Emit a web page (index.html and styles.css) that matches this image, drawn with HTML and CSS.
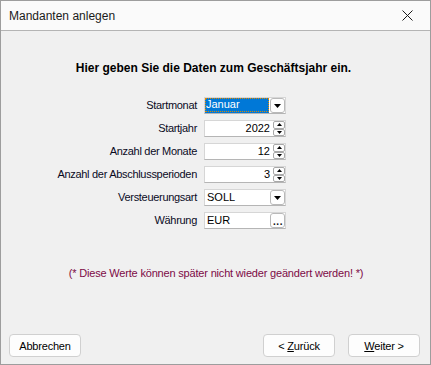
FILE: index.html
```html
<!DOCTYPE html>
<html lang="de">
<head>
    <meta charset="UTF-8">
    <title>Mandanten anlegen</title>
    <link rel="stylesheet" href="styles.css">
</head>
<body>
    <div class="dialog">
        <div class="titlebar">
            <span class="title">Mandanten anlegen</span>
            <span class="close">
                <svg width="11" height="11" viewBox="0 0 11 11"><path d="M0.5 0.5L10.5 10.5M10.5 0.5L0.5 10.5" stroke="#1a1a1a" stroke-width="1" fill="none"/></svg>
            </span>
        </div>

        <div class="content">
            <h1 class="intro">Hier geben Sie die Daten zum Geschäftsjahr ein.</h1>

            <div class="form">
                <label>Startmonat</label>
                <div class="combo focused">
                    <span class="combo-value"><span class="selected">Januar</span></span>
                    <span class="combo-btn"><svg width="7" height="4" viewBox="0 0 7 4"><path d="M0 0h7L3.5 4z"/></svg></span>
                </div>

                <label>Startjahr</label>
                <div class="spin">
                    <span class="spin-value">2022</span>
                    <span class="spin-btns">
                        <span class="spin-btn"><svg width="5" height="3" viewBox="0 0 5 3"><path d="M0 3h5L2.5 0z"/></svg></span>
                        <span class="spin-btn"><svg width="5" height="3" viewBox="0 0 5 3"><path d="M0 0h5L2.5 3z"/></svg></span>
                    </span>
                </div>

                <label>Anzahl der Monate</label>
                <div class="spin">
                    <span class="spin-value">12</span>
                    <span class="spin-btns">
                        <span class="spin-btn"><svg width="5" height="3" viewBox="0 0 5 3"><path d="M0 3h5L2.5 0z"/></svg></span>
                        <span class="spin-btn"><svg width="5" height="3" viewBox="0 0 5 3"><path d="M0 0h5L2.5 3z"/></svg></span>
                    </span>
                </div>

                <label>Anzahl der Abschlussperioden</label>
                <div class="spin">
                    <span class="spin-value">3</span>
                    <span class="spin-btns">
                        <span class="spin-btn"><svg width="5" height="3" viewBox="0 0 5 3"><path d="M0 3h5L2.5 0z"/></svg></span>
                        <span class="spin-btn"><svg width="5" height="3" viewBox="0 0 5 3"><path d="M0 0h5L2.5 3z"/></svg></span>
                    </span>
                </div>

                <label>Versteuerungsart</label>
                <div class="combo">
                    <span class="combo-value">SOLL</span>
                    <span class="combo-btn"><svg width="7" height="4" viewBox="0 0 7 4"><path d="M0 0h7L3.5 4z"/></svg></span>
                </div>

                <label>Währung</label>
                <div class="combo">
                    <span class="combo-value">EUR</span>
                    <span class="combo-btn dots">...</span>
                </div>
            </div>

            <p class="note">(* Diese Werte können später nicht wieder geändert werden! *)</p>

            <div class="actions">
                <button>Abbrechen</button>
                <div class="nav">
                    <button>&lt; <u>Z</u>urück</button>
                    <button><u>W</u>eiter &gt;</button>
                </div>
            </div>
        </div>
    </div>
</body>
</html>
```

FILE: styles.css
```css
* {
    box-sizing: border-box;
    margin: 0;
    padding: 0;
}

body {
    font-family: "Liberation Sans", Arial, sans-serif;
    font-size: 11px;
    color: #111;
    background: #f0f0f0;
}

.dialog {
    width: 431px;
    height: 365px;
    border: 1px solid #9d9d9d;
    display: flex;
    flex-direction: column;
    background: #f0f0f0;
}

.titlebar {
    height: 30px;
    flex: none;
    display: flex;
    align-items: center;
    justify-content: space-between;
    background: #fafafa;
    border-bottom: 1px solid #b4b4b4;
    padding: 0 17px 0 8px;
}

.title {
    font-size: 12px;
    color: #1a1a1a;
}

.close {
    display: flex;
}

.content {
    flex: 1;
    display: flex;
    flex-direction: column;
    padding-top: 30px;
}

.intro {
    font-size: 12px;
    font-weight: bold;
    line-height: 14px;
    text-align: center;
    color: #000;
    padding-right: 4px;
}

.form {
    display: grid;
    grid-template-columns: 196px 82px;
    column-gap: 7px;
    row-gap: 6px;
    margin-top: 22px;
}

.form label {
    text-align: right;
    line-height: 17px;
    letter-spacing: -0.3px;
    color: #0a0a1e;
}

.combo,
.spin {
    display: flex;
    height: 17px;
    background: #fff;
    border: 1px solid #d6d6d6;
    border-bottom-color: #b5b5b5;
}

.combo-value {
    flex: 1;
    padding-left: 2px;
    line-height: 15px;
    font-size: 11px;
    color: #000;
}

.combo.focused .combo-value {
    padding: 0;
    border-bottom: 2px solid #0078d7;
}

.selected {
    display: block;
    height: 14px;
    line-height: 13px;
    padding-left: 1px;
    background: #0078d7;
    color: #fff;
    outline: 1px dotted #e08a00;
    outline-offset: -1px;
}

.combo-btn {
    width: 15px;
    margin: 0 0 0 1px;
    display: flex;
    align-items: center;
    justify-content: center;
    border: 1px solid #b9b9b9;
    border-radius: 3px;
    background: #fefefe;
}

.combo-btn svg {
    margin-top: 1px;
}

.combo-btn.dots {
    align-items: flex-end;
    font-weight: bold;
    font-size: 10px;
    line-height: 10px;
    letter-spacing: 0.5px;
    padding-left: 1px;
}

.spin-value {
    flex: 1;
    text-align: right;
    padding-right: 3px;
    line-height: 15px;
    color: #000;
}

.spin-btns {
    width: 12px;
    display: flex;
    flex-direction: column;
}

.spin-btn {
    flex: 1;
    display: flex;
    align-items: center;
    justify-content: center;
    border: 1px solid #a8a8a8;
    border-radius: 2px;
    background: #fdfdfd;
}

.note {
    margin-top: 38px;
    text-align: center;
    line-height: 13px;
    letter-spacing: -0.18px;
    color: #7d0a46;
    padding-left: 1px;
}

.actions {
    margin-top: auto;
    display: flex;
    justify-content: space-between;
    padding: 0 10px 7px 8px;
}

.nav {
    display: flex;
    gap: 13px;
}

button {
    width: 72px;
    height: 23px;
    font-family: "Liberation Sans", Arial, sans-serif;
    font-size: 11px;
    letter-spacing: -0.2px;
    color: #000;
    background: #fdfdfd;
    border: 1px solid #d0d0d0;
    border-radius: 4px;
}
```
